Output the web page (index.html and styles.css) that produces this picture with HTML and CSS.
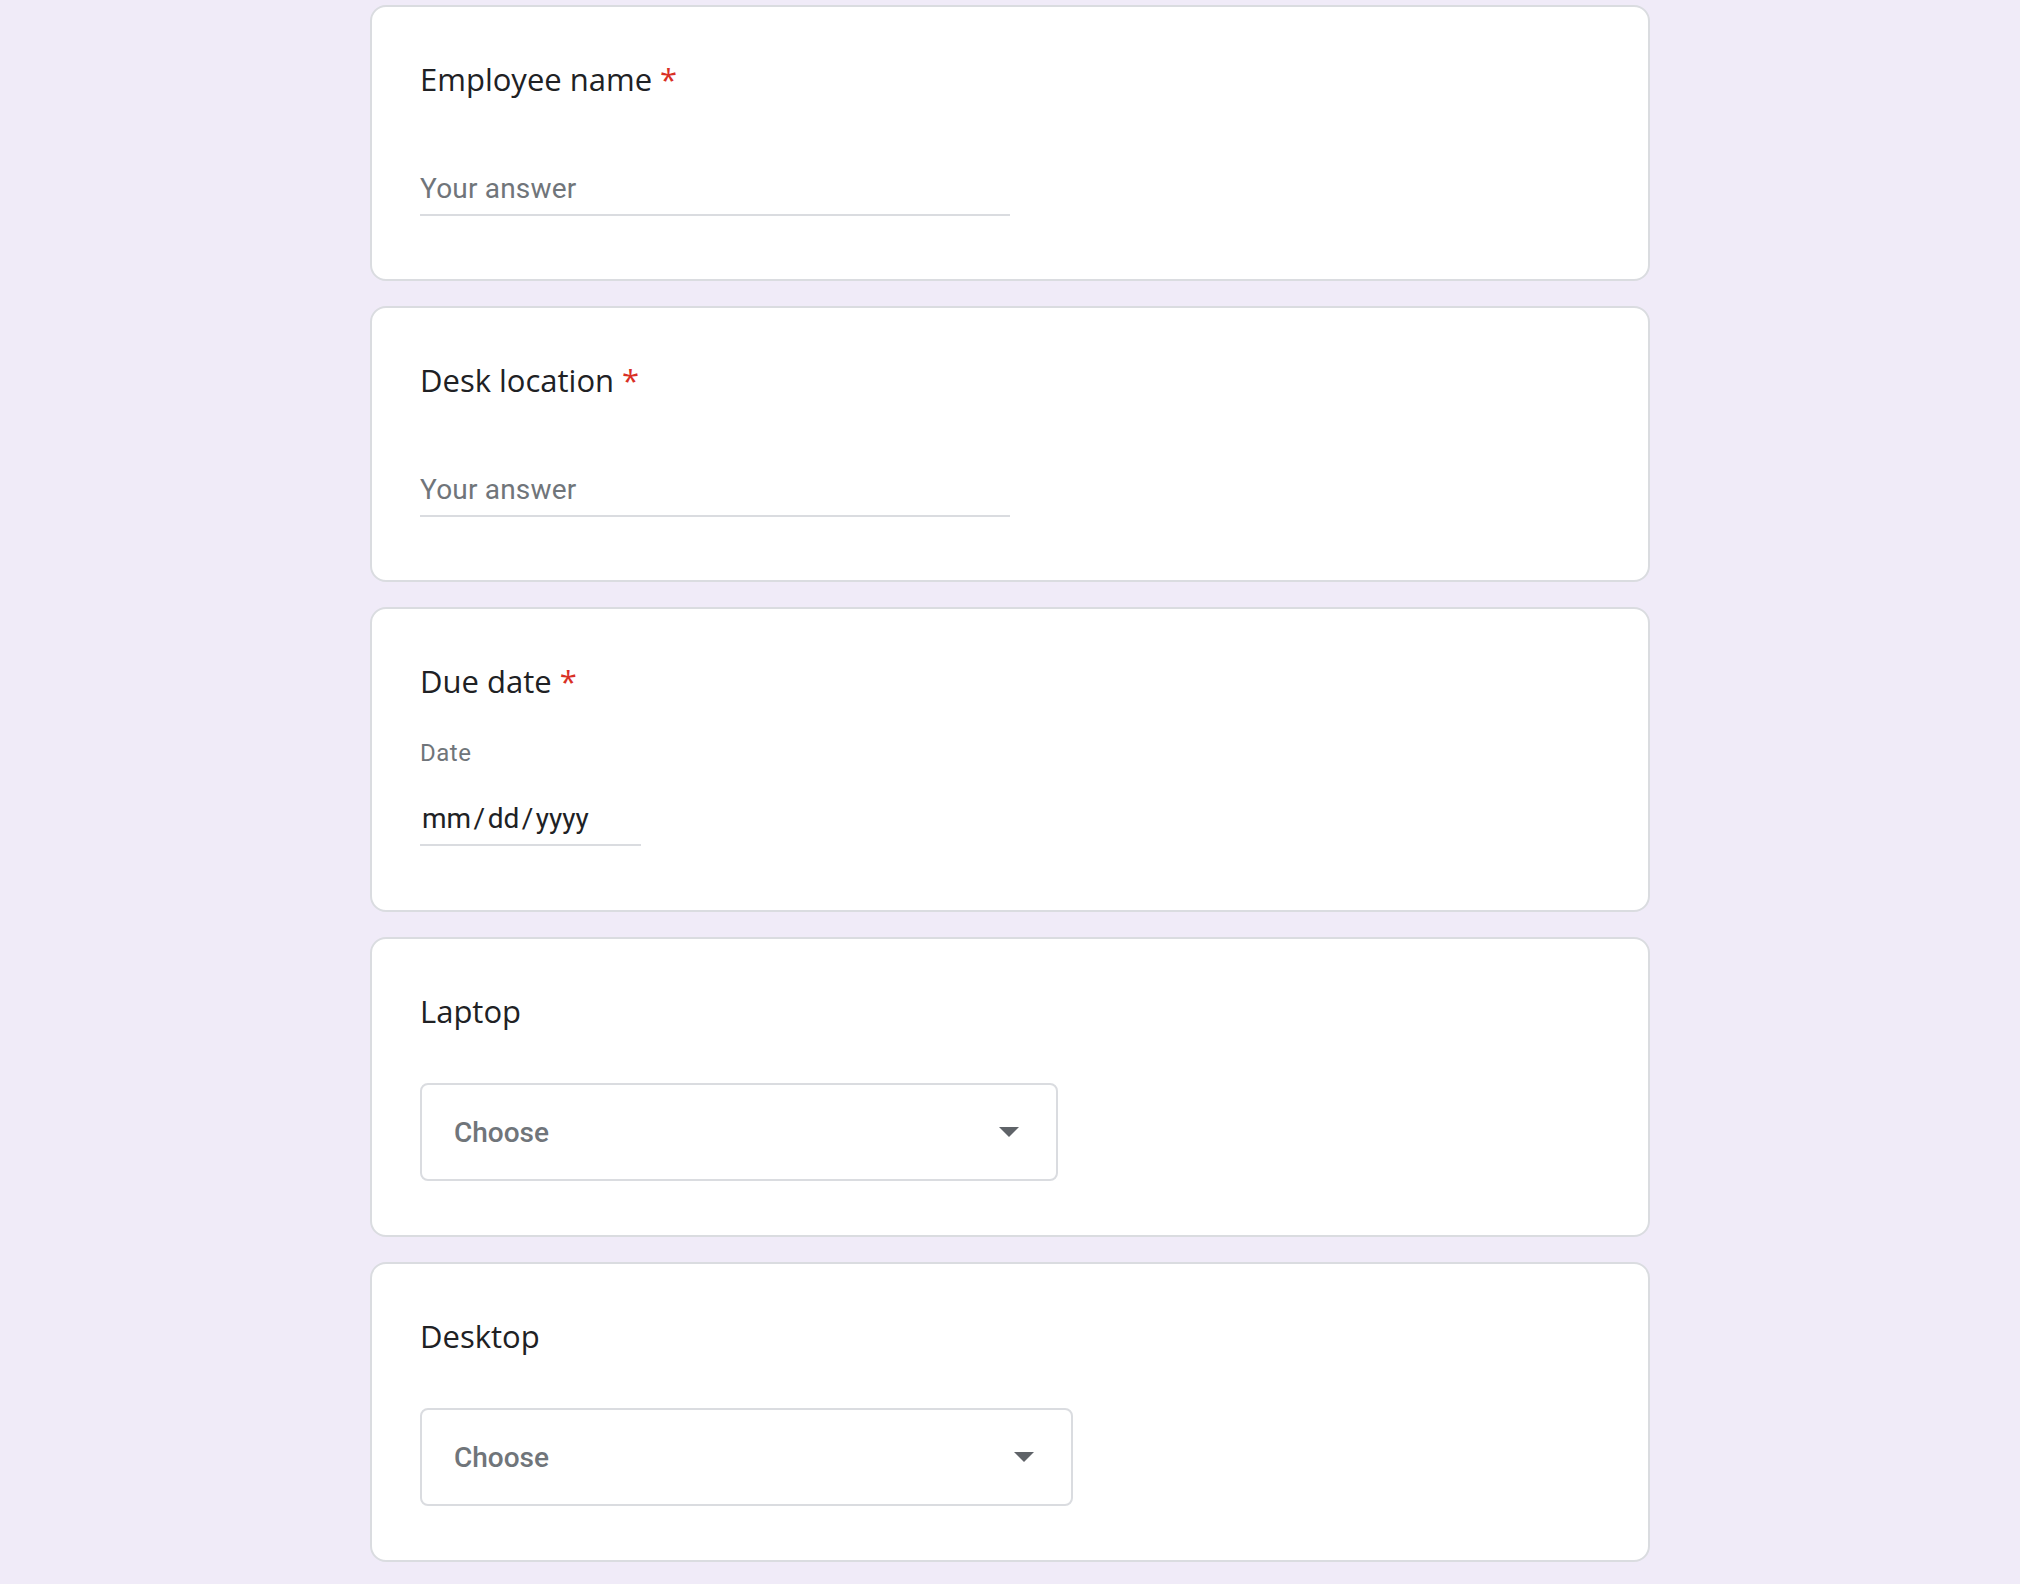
FILE: index.html
```html
<!DOCTYPE html>
<html lang="en">
<head>
    <meta charset="UTF-8">
    <meta name="viewport" content="width=device-width, initial-scale=1.0">
    <title>Equipment Request</title>
    <link rel="stylesheet" href="styles.css">
</head>
<body>

    <main class="form">
        <section class="card">
            <div class="question-title">Employee name<span class="required">*</span></div>
            <div class="text-answer">
                <span class="placeholder">Your answer</span>
            </div>
        </section>

        <section class="card">
            <div class="question-title">Desk location<span class="required">*</span></div>
            <div class="text-answer">
                <span class="placeholder">Your answer</span>
            </div>
        </section>

        <section class="card">
            <div class="question-title">Due date<span class="required">*</span></div>
            <div class="date-label">Date</div>
            <div class="date-answer">
                <span class="date-value">mm<span class="sep">/</span>dd<span class="sep">/</span>yyyy</span>
            </div>
        </section>

        <section class="card">
            <div class="question-title">Laptop</div>
            <div class="dropdown laptop">
                <span class="dropdown-text">Choose</span>
                <span class="dropdown-arrow"></span>
            </div>
        </section>

        <section class="card">
            <div class="question-title">Desktop</div>
            <div class="dropdown desktop">
                <span class="dropdown-text">Choose</span>
                <span class="dropdown-arrow"></span>
            </div>
        </section>
    </main>

</body>
</html>
```

FILE: styles.css
```css
* {
    box-sizing: border-box;
}

body {
    margin: 0;
    background-color: #f0ebf8;
    font-family: Roboto, Arial, sans-serif;
}

.form {
    width: 1280px;
    margin: 0 auto;
    padding: 5px 0 20px;
    display: flex;
    flex-direction: column;
    gap: 25px;
}

.card {
    background-color: #ffffff;
    border: 2px solid #dadce0;
    border-radius: 16px;
    padding: 48px;
}

.question-title {
    height: 48px;
    font-family: "Open Sans", Roboto, sans-serif;
    font-size: 31px;
    line-height: 48px;
    color: #202124;
}

.required {
    color: #d93025;
    padding-left: 8px;
}

/* short answer */
.text-answer {
    width: 590px;
    margin-top: 66px;
    margin-bottom: 15px;
    padding-bottom: 5px;
    border-bottom: 2px solid #dadce0;
}

.placeholder {
    display: block;
    font-size: 28px;
    line-height: 40px;
    color: #70757a;
    letter-spacing: 0.2px;
}

/* date */
.date-label {
    margin-top: 32px;
    font-size: 24px;
    line-height: 32px;
    color: #70757a;
    letter-spacing: 0.5px;
}

.date-answer {
    width: 221px;
    margin-top: 30px;
    margin-bottom: 16px;
    padding-bottom: 5px;
    border-bottom: 2px solid #dadce0;
}

.date-value {
    display: block;
    padding-left: 2px;
    font-size: 28px;
    line-height: 40px;
    color: #202124;
}

.sep {
    margin: 0 2.5px;
}

/* dropdown */
.dropdown {
    height: 98px;
    margin-top: 48px;
    margin-bottom: 6px;
    padding: 0 37px 0 32px;
    display: flex;
    align-items: center;
    justify-content: space-between;
    border: 2px solid #dadce0;
    border-radius: 8px;
}

.dropdown.laptop {
    width: 638px;
}

.dropdown.desktop {
    width: 653px;
}

.dropdown-text {
    font-size: 28px;
    font-weight: 500;
    color: #70757a;
}

.dropdown-arrow {
    width: 0;
    height: 0;
    border-left: 10px solid transparent;
    border-right: 10px solid transparent;
    border-top: 10px solid #5f6368;
}
```
